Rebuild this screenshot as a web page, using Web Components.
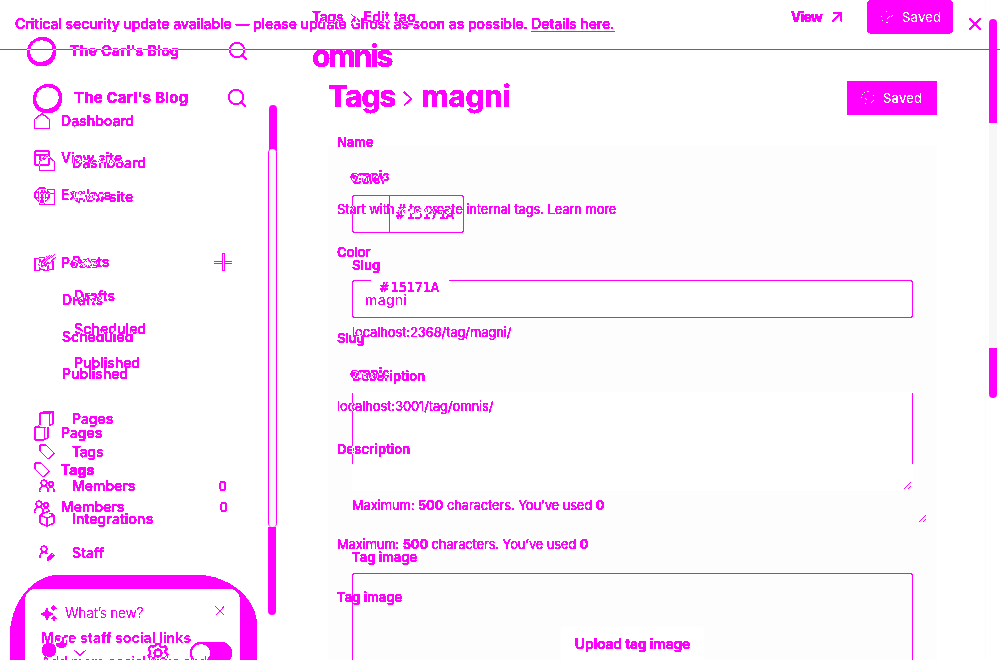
<!DOCTYPE html>
<html lang="en"><head><meta charset="utf-8"><title>Tags</title>
<style>
html,body{margin:0;width:1000px;height:660px;overflow:hidden;background:#fff}
body{font-family:Inter,"Liberation Sans",sans-serif;color:#f0f;--ink:#f0f;--paper:#fff}
tag-stage{width:1000px;height:660px}
</style></head><body>
<tag-stage></tag-stage>
<script>
const def=(name,html,after)=>customElements.define(name,class extends HTMLElement{
  connectedCallback(){
    if(this.shadowRoot)return;
    this.attachShadow({mode:'open'}).innerHTML=typeof html==='function'?html(this):html;
    if(after)after(this);
  }
});

// Text run whose tracking is adjusted to a given width.
def('fit-text','<style>:host{display:block;white-space:nowrap;flex:none;line-height:20px}span{display:inline-block}</style><span><slot></slot></span>',el=>{
  const s=el.shadowRoot.querySelector('span'),w=+el.getAttribute('w');
  if(w){const n=el.textContent.length;s.style.letterSpacing=((w+.3-s.getBoundingClientRect().width)/n).toFixed(3)+'px';}
});

const icons={
 home:'<path d="M.5 6.200 8 .7l7.500 5.500v9.300H.5z"/>',
 site:'<rect x=".8" y=".8" width="14.4" height="14.4" rx="1.5"/><path d="M1 4.800h14M5.800 5v4.500h5V5"/>',
 window:'<path d="M.5 15.500V.5h15v15z"/><path d="M1 4.500h14M5.500 5v10"/>',
 globe:'<circle cx="8" cy="8" r="7.3"/><ellipse cx="8" cy="8" rx="3.3" ry="7.3"/><path d="M1 5.500h14M1 10.500h14M8 1v14"/>',
 edit:'<path d="M6.500 3.500H.7v12h5M14 7.500v8H9M15.200.8 7.500 8.500l-1.400 3.600 3.400-1.500L16 3.600M13 1 5 9.500"/>',
 pages:'<rect x=".9" y="2" width="9.6" height="13" rx="1"/><path d="M4.200 1.800V.7h10v12l-3.700 1.800M10.500 3l1.800-2"/>',
 tag:'<path d="M.9.9h6l8.200 8.200-6 6L.9 7z"/>',
 members:'<circle cx="5" cy="5" r="2.9"/><circle cx="12" cy="6" r="2.3"/><path d="M.7 14v-1.700C.9 9.700 2.800 8.400 5 8.400s4 1.400 4.200 3.900V14M10 9.700c2.800-1.200 5.300.3 5.300 3V14"/>',
 cube:'<path d="m8 .8 7 3.200v8l-7 3.300L1 12V4zM1 4l7 3.300L15 4M8 7.300v8"/>',
 staff:'<circle cx="5" cy="4" r="2.9"/><path d="M.7 13v-1.300C.9 8.800 2.800 7.500 5 7.500c1.700 0 2.700.6 3.300 1.400M8.400 15.200l.5-2.800L13 8.200l2.200 2-4.100 4.300zM10 13.500l3-3"/>',
 search:'<circle cx="8" cy="8" r="7.2"/><path d="m13.200 13.200 4.600 4.600"/>',
 plus:'<path fill="var(--ink)" stroke="none" shape-rendering="crispEdges" d="M8 0h3v8h7v1h-7v1h7v1h-7v7H8v-7H0v-1h8V9H0V8h8zM9 1v16h1V1z" fill-rule="evenodd"/>',
 close:'<path d="M.6.6l10.800 10.800M11.400.6.6 11.400"/>',
 chevron:'<path d="m1 1 7.400 6.700L1 14.400"/>',
 down:'<path d="m.5.5 5.500 5 5.500-5"/>',
 arrow:'<path d="M.6 9.400 9 1M1.200.8h8.200v8.400"/>',
 grip:'<path d="m0 7 7-7M4 7l3-3"/>',
 spin:'<path stroke="none" fill="var(--paper)" shape-rendering="crispEdges" d="M6 0h2v1H6zM3 1h1v1H3zM1 3h1v1H1zM0 6h1v1H0zM4 7h1v1H4zM5 8h1v1H5zM12 4h1v1h-1zM12 9h1v1h-1zM11 10h1v1h-1zM10 11h1v1h-1zM4 12h1v1H4z"/>',
 spin2:'<path stroke="none" fill="var(--paper)" shape-rendering="crispEdges" d="M6 1h1v1H6zM1 6h1v1H1zM12 5h1v1h-1zM11 6h1v1h-1zM7 8h1v1H7zM8 7h1v1H8zM9 6h1v1H9zM2 10h1v1H2zM6 12h2v1H6z"/>',
 sparkle:'<path fill="var(--ink)" stroke="none" d="M6 2.200 8 6.800 12.500 9 8 11.300 6 16.500 3.900 11.300-.500 9l4.400-2.200zM12.500-.7l1.200 2.400L16.500 3l-2.800 1.400-1.200 2.600-1.200-2.600L8.700 3l2.600-1.300zM13 10l1.100 2.200 2.500 1.100-2.500 1.200L13 17l-1.100-2.500-2.500-1.200 2.500-1.100z"/>',
 gear:'<circle cx="10" cy="10" r="3.6"/><path d="M8 .9h4l.6 2.700 2 .9 2.400-1.500 2 3-1.700 2 .3 2.200 2 1.500-1.300 3.300-2.800-.2-1.700 1.700.2 2.300H7l-.5-2.600-2-1.200-2.500.6-1.600-3 1.900-2-.2-2.300L.7 6.200 2.600 3l2.700.8 1.900-.8z"/>'
};
def('line-icon',el=>{
  const w=el.getAttribute('w')||16,h=el.getAttribute('h')||w;
  return `<style>:host{display:block;flex:none;width:${w}px;height:${h}px}svg{display:block;overflow:visible;stroke:var(--ink)}</style><svg width="${w}" height="${h}" fill="none" stroke-width="${el.getAttribute('s')||1}">${icons[el.getAttribute('n')]}</svg>`;
});

def('brand-ring','<style>:host{display:block;flex:none;width:31px;height:31px}svg{display:block}path{fill:var(--ink)}</style><svg width="31" height="31"><path fill-rule="evenodd" d="M16 .9C23 .9 30 6 30 15c0 9-6 15-14 15C7 30 1 24 1 16 1 8 8 1.500 16 .9zM16 4C10 3.500 4.500 8 4 15c-.5 6 4 11.500 10 11.500C22 26 27.500 20 27 13.500 26.500 7.500 22 4 16 4z"/></svg>');

// One navigation line: optional icon, label and trailing slot.
def('nav-row',el=>`<style>:host{display:flex;align-items:center;height:var(--row);box-sizing:border-box;padding-left:var(--edge);font-size:14px}
 :host([sub]){padding-left:var(--sub)}line-icon{margin-right:var(--gap)}::slotted([slot=end]){margin-left:auto}</style>
 ${el.hasAttribute('icon')?`<line-icon n="${el.getAttribute('icon')}"></line-icon>`:''}<slot></slot><slot name="end"></slot>`);

def('saved-button',el=>`<style>:host{display:flex;align-items:center;box-sizing:border-box;height:34px;background:var(--ink);color:var(--paper);flex:none;font-size:13px;font-weight:500}line-icon{margin-right:8px}</style>
 <line-icon n="${el.getAttribute('spin')}" w="14"></line-icon><fit-text w="39">Saved</fit-text>`);

def('form-line','<style>:host{display:flex;align-items:center;height:20px;font-size:13px;font-weight:440}</style><slot></slot>');

def('whats-new',`<style>
:host{display:block;width:247px;height:85px;background:#f0f;border-radius:50px 62px 0 0/62px 52px 0 0;padding:14px 17px 0 15px;box-sizing:border-box}
.card{height:80px;background:#fff;border-radius:10px 10px 0 0;padding:14px 15px 0 16px}
.top{display:flex;align-items:center;height:20px;font-size:14px;font-weight:400}.top fit-text{margin-left:8px}.x{margin-left:auto;margin-top:-6px}
b,p{display:block;margin:0;font-size:14px}b{margin-top:5px;font-weight:700}p{margin-top:4px;font-weight:500}</style>
<div class="card"><div class="top"><line-icon n="sparkle"></line-icon><fit-text w="78">What’s new?</fit-text><line-icon class="x" n="close" w="12" s="1.3" style="zoom:.82"></line-icon></div>
<b><fit-text w="150">More staff social links</fit-text></b><p><fit-text w="166">Add more social links and</fit-text></p></div>`);

// Admin view with the update banner.
def('banner-view',`<style>
:host{display:flex;flex-direction:column;width:1000px;height:660px}
.banner{display:flex;align-items:center;justify-content:space-between;flex:none;border-bottom:1px solid #f0f;padding:0 19px 1px 15px;box-sizing:border-box;height:50px;font-size:14px;font-weight:450}
.banner u{text-underline-offset:2px;text-decoration-thickness:1px}
.cols{display:grid;grid-template-columns:312px 1fr;height:610px}
nav{--row:33.500px;--edge:39px;--sub:74px;--gap:17px;padding-right:82px;font-weight:450}
.site{display:flex;align-items:center;height:40px;margin-top:28px;margin-bottom:28.250px;padding-left:32px;font-weight:700;font-size:15px;margin-right:-16px}
.site fit-text{margin-left:11px}.site line-icon{margin-left:auto}
main{padding-left:40px}
.head{display:flex;align-items:center;height:34px;margin:31px 63px 0 -24px;font-size:30px;font-weight:700}
.head fit-text{margin-top:-4px}
.head line-icon{margin:0 9px 0 8px}.head saved-button{margin-left:auto;width:90px;padding-left:14px;border-radius:2px}
.color{display:grid;grid-template-columns:37px 1fr;width:112px;height:38px;box-sizing:border-box;border:1px solid #f0f;border-radius:3px;margin-top:6px}
.color div+div{display:flex;align-items:center;border-left:1px solid #f0f;padding-left:6px;font:14px "DejaVu Sans Mono",monospace;margin-left:-1px}
.input{display:flex;align-items:center;width:561px;height:38px;box-sizing:border-box;border:1px solid #f0f;border-radius:3px;background:#fff;padding:1px 0 0 12px;font-size:14px;font-weight:500;margin-top:5px}
.area{display:flex;align-items:flex-end;justify-content:flex-end;width:561px;height:99px;box-sizing:border-box;padding:0 2px 2px 0;margin-top:6px;background:linear-gradient(#f0f,#f0f) 0 1px/1px 71px no-repeat,linear-gradient(#f0f,#f0f) 100% 1px/1px 71px no-repeat}
.upload{width:561px;height:100px;box-sizing:border-box;border:1px solid #f0f;border-radius:3px;margin-top:6px;display:flex;justify-content:center;padding-top:60px;font-size:14px;font-weight:600}
b{font-weight:700}.label{font-weight:600}
</style>
<div class="banner"><fit-text w="599">Critical security update available — please update Ghost as soon as possible. <u>Details here.</u></fit-text><line-icon n="close" w="12" s="1.5"></line-icon></div>
<div class="cols"><nav>
<div class="site"><brand-ring></brand-ring><fit-text w="114">The Carl's Blog</fit-text><line-icon n="search" w="18" s="1.3"></line-icon></div>
<nav-row icon="home"><fit-text w="74">Dashboard</fit-text></nav-row>
<nav-row icon="window"><fit-text w="61">View site</fit-text></nav-row>
<nav-row icon="edit" style="margin-top:32.250px"><fit-text w="37">Posts</fit-text><line-icon n="plus" w="18" slot="end" style="margin-right:-2px"></line-icon></nav-row>
<nav-row sub><fit-text w="41">Drafts</fit-text></nav-row>
<nav-row sub><fit-text w="72">Scheduled</fit-text></nav-row>
<nav-row sub><fit-text w="66">Published</fit-text></nav-row>
<nav-row icon="pages" style="margin-top:22.500px"><fit-text w="41">Pages</fit-text></nav-row>
<nav-row icon="tag"><fit-text w="31">Tags</fit-text></nav-row>
<nav-row icon="members"><fit-text w="63">Members</fit-text><span slot="end" style="font-size:13px;margin-right:3px">0</span></nav-row>
<nav-row icon="cube"><fit-text w="81">Integrations</fit-text></nav-row>
<nav-row icon="staff"><fit-text w="32">Staff</fit-text></nav-row>
<whats-new style="margin:5.500px 0 0 10px"></whats-new>
</nav><main>
<div class="head"><fit-text w="67">Tags</fit-text><line-icon n="chevron" w="9" h="15" s="1.3"></line-icon><fit-text w="89">magni</fit-text><saved-button spin="spin"></saved-button></div>
<form-line class="label" style="margin-top:54px"><fit-text w="34">Color</fit-text></form-line>
<div class="color"><div></div><div><span style="margin-right:2px">#</span><fit-text w="47">15171A</fit-text></div></div>
<form-line class="label" style="margin-top:22px"><fit-text w="28">Slug</fit-text></form-line>
<div class="input"><fit-text w="42">magni</fit-text></div>
<form-line style="margin-top:4px"><fit-text w="159">localhost:2368/tag/magni/</fit-text></form-line>
<form-line class="label" style="margin-top:24px"><fit-text w="73">Description</fit-text></form-line>
<div class="area"><line-icon n="grip" w="7"></line-icon></div>
<form-line style="margin-top:4px"><fit-text w="252">Maximum: <b>500</b> characters. You’ve used <b>0</b></fit-text></form-line>
<form-line class="label" style="margin-top:32px"><fit-text w="65">Tag image</fit-text></form-line>
<div class="upload"><fit-text w="115">Upload tag image</fit-text></div>
</main></div>`);

// Admin view with the compact header; its inks are complementary because it is blended by difference.
def('compact-view',`<style>
:host{--ink:#0f0;--paper:#000;color:#0f0;display:grid;grid-template-columns:312px 1fr;width:1000px;height:660px;overflow:hidden}
nav{--row:36px;--edge:34px;--sub:62px;--gap:11px;display:flex;flex-direction:column;gap:1px;padding:33px 84px 0 0;font-weight:550}
.site{display:flex;align-items:center;height:36px;padding-left:26px;margin-right:-19px;margin-bottom:33px;font-weight:650;font-size:14px}
.site fit-text{margin-left:13px}.site line-icon{margin-left:auto}
.foot{display:flex;align-items:center;height:24px;margin:115px -4px 0 41px}
.avatar{display:grid;grid-template-columns:15px 11px;align-items:start;height:20px;width:26px}
.avatar i{width:14px;height:14px;border-radius:50%;background:var(--ink);margin-left:1px}.avatar i+i{width:11px;height:11px;margin:-6px 0 0}
.toggle{box-sizing:border-box;width:42px;height:22px;border-radius:11px;background:var(--ink);padding:2px;margin-left:auto}.toggle i{display:block;width:18px;height:18px;border-radius:50%;background:var(--paper)}
.bar{display:flex;align-items:center;height:34px;font-size:14px;font-weight:500}
.bar line-icon{margin:0 11px 0 10px}.view{margin-left:auto;display:flex;align-items:center;font-weight:700}
.bar saved-button{width:86px;padding-left:13px;border-radius:5px;margin:0 47px 0 14px}
h1{margin:2px 0 0;height:40px;display:flex;align-items:center;font-size:30px;font-weight:700}
section{padding-left:25px}form-line.v{font-size:14px;padding-left:13px;font-weight:500}.label{font-weight:600}
.hex{display:flex;align-items:center;height:13px;margin:18px 0 2px 34px;width:78px;border-top:1px solid var(--ink);font:14px "DejaVu Sans Mono",monospace;padding-left:9px;box-sizing:border-box;line-height:12px}
.hex>*{margin-top:-1px}
.grip{display:flex;height:8px;margin:56px 0 11px 582px}b{font-weight:700}
</style><nav>
<div class="site"><brand-ring></brand-ring><fit-text w="109">The Carl's Blog</fit-text><line-icon n="search" w="18" s="1.3"></line-icon></div>
<nav-row icon="home"><fit-text w="73">Dashboard</fit-text></nav-row>
<nav-row icon="site"><fit-text w="61">View site</fit-text></nav-row>
<nav-row icon="globe"><fit-text w="50">Explore</fit-text></nav-row>
<nav-row icon="edit" style="margin-top:31px"><fit-text w="37">Posts</fit-text></nav-row>
<nav-row sub><fit-text w="41">Drafts</fit-text></nav-row>
<nav-row sub><fit-text w="71">Scheduled</fit-text></nav-row>
<nav-row sub><fit-text w="66">Published</fit-text></nav-row>
<nav-row icon="pages" style="margin-top:22px"><fit-text w="41">Pages</fit-text></nav-row>
<nav-row icon="tag" style="font-weight:800"><fit-text w="33">Tags</fit-text></nav-row>
<nav-row icon="members"><fit-text w="63">Members</fit-text><span slot="end" style="font-size:13px">0</span></nav-row>
<div class="foot"><div class="avatar"><i></i><i></i></div><line-icon n="down" w="12" h="6" style="margin-left:7px"></line-icon><line-icon n="gear" w="20" s="1.5" style="margin-left:62px"></line-icon><div class="toggle"><i></i></div></div>
</nav><main>
<div class="bar"><fit-text w="31">Tags</fit-text><line-icon n="chevron" w="8" h="15" s="1.4" style="margin:6px 5px 0 12px;zoom:.65"></line-icon><fit-text w="52" style="margin-left:4px">Edit tag</fit-text><div class="view"><fit-text w="31">View</fit-text><line-icon n="arrow" w="10" s="1.4"></line-icon></div><saved-button spin="spin2"></saved-button></div>
<h1><fit-text w="79">omnis</fit-text></h1>
<section>
<form-line class="label" style="margin-top:56px"><fit-text w="36">Name</fit-text></form-line>
<form-line class="v" style="margin-top:14px"><fit-text w="39">omnis</fit-text></form-line>
<form-line style="margin-top:13px"><fit-text w="279">Start with # to create internal tags. Learn more</fit-text></form-line>
<form-line class="label" style="margin-top:23px"><fit-text w="33">Color</fit-text></form-line>
<div class="hex"><span style="margin-right:2px">#</span><fit-text w="48">15171A</fit-text></div>
<form-line class="label" style="margin-top:35px"><fit-text w="27">Slug</fit-text></form-line>
<form-line class="v" style="margin-top:15px"><fit-text w="39">omnis</fit-text></form-line>
<form-line style="margin-top:13px"><fit-text w="156">localhost:3001/tag/omnis/</fit-text></form-line>
<form-line class="label" style="margin-top:23px"><fit-text w="73">Description</fit-text></form-line>
<div class="grip"><line-icon n="grip" w="7"></line-icon></div>
<form-line><fit-text w="251">Maximum: <b>500</b> characters. You’ve used <b>0</b></fit-text></form-line>
<form-line class="label" style="margin-top:33px"><fit-text w="65">Tag image</fit-text></form-line>
</section></main>`);

def('pale-panels',`<style>:host{display:grid;grid-template-columns:328px 609px 48px 15px;width:1000px;height:660px}
.p{margin-top:146px;background:#fdfdfd;padding:134px 24px 0}.p div{background:#fff}.e{grid-column:4;border-left:1px solid #fcfcfc}
.a{height:38px}.b{height:99px;margin-top:74px}.c{height:40px;margin:136px auto 0;width:143px;border-radius:3px}</style>
<span></span><div class="p"><div class="a"></div><div class="b"></div><div class="c"></div></div><div class="e"></div>`);

def('scroll-track',el=>`<style>:host{display:block;width:${el.hasAttribute('side')?9:8}px}
div{box-sizing:border-box;width:8px;background:#f0f}.t{border-radius:4px 4px 0 0}.m{background:#f7f7f7}.e{border-radius:0 0 4px 4px}
:host([side]) .t{margin-left:1px;height:46px}:host([side]) .m{height:378px;width:9px;border:solid #f0f;border-width:0 1px;border-radius:4px;margin-top:-2px}:host([side]) .e{height:88px}
:host([page]) .t{height:104px}:host([page]) .m{height:225px}:host([page]) .e{height:50px}</style><div class="t"></div><div class="m"></div><div class="e"></div>`);

def('tag-stage',`<style>:host{display:grid;position:relative;isolation:isolate;background:#fff;overflow:hidden}.ink{filter:url(#crisp)}
.f{width:0;height:0}.f,.rails,pale-panels,banner-view,compact-view{grid-area:1/1}
compact-view{mix-blend-mode:difference}
.rails{display:flex;justify-content:space-between;padding:0 3px 0 268px;height:0;position:relative;z-index:1}
scroll-track[side]{margin-top:105px}scroll-track[page]{margin-top:19px}</style>
<svg class="f"><filter id="crisp" x="0" y="0" width="1" height="1" color-interpolation-filters="sRGB"><feComponentTransfer><feFuncG type="discrete" tableValues="0 0 1 1"/><feFuncA type="discrete" tableValues="0 1 1 1 1 1"/></feComponentTransfer></filter></svg>
<pale-panels></pale-panels><banner-view class="ink"></banner-view><compact-view class="ink"></compact-view>
<div class="rails"><scroll-track side></scroll-track><scroll-track page></scroll-track></div>`);
</script></body></html>
